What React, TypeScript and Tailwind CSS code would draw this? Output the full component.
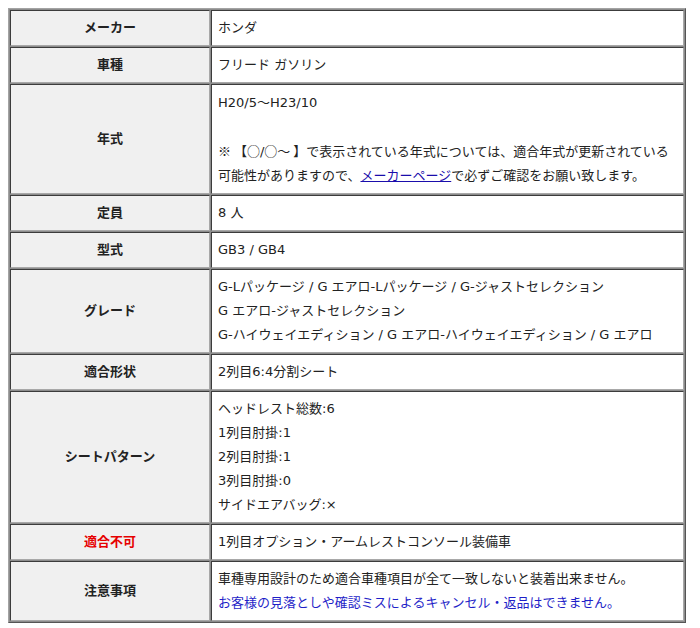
import React from "react";

type Row = {
  label: string;
  labelClass?: string;
  lines: React.ReactNode[];
};

const Cjk = ({ children }: { children: React.ReactNode }) => (
  <span className="font-['Noto_Sans_CJK_JP',sans-serif]">{children}</span>
);

const rows: Row[] = [
  { label: "メーカー", lines: ["ホンダ"] },
  { label: "車種", lines: ["フリード ガソリン"] },
  {
    label: "年式",
    lines: [
      <>
        H20/5<Cjk>～</Cjk>H23/10
      </>,
      "\u00a0",
      <>
        <Cjk>※ 【○</Cjk>/<Cjk>○～ 】</Cjk>で表示されている年式については、適合年式が更新されている
      </>,
      <>
        可能性がありますので、
        <a href="#" className="text-[#1a0dab] underline">
          メーカーページ
        </a>
        で必ずご確認をお願い致します。
      </>,
    ],
  },
  { label: "定員", lines: ["8 人"] },
  { label: "型式", lines: ["GB3 / GB4"] },
  {
    label: "グレード",
    lines: [
      "G-Lパッケージ / G エアロ-Lパッケージ / G-ジャストセレクション",
      "G エアロ-ジャストセレクション",
      "G-ハイウェイエディション / G エアロ-ハイウェイエディション / G エアロ",
    ],
  },
  { label: "適合形状", lines: ["2列目6:4分割シート"] },
  {
    label: "シートパターン",
    lines: ["ヘッドレスト総数:6", "1列目肘掛:1", "2列目肘掛:1", "3列目肘掛:0", "サイドエアバッグ:×"],
  },
  { label: "適合不可", labelClass: "text-[#e60000]", lines: ["1列目オプション・アームレストコンソール装備車"] },
  {
    label: "注意事項",
    lines: [
      "車種専用設計のため適合車種項目が全て一致しないと装着出来ません。",
      <span className="text-[#1f1fc8]">お客様の見落としや確認ミスによるキャンセル・返品はできません。</span>,
    ],
  },
];

export default function App() {
  return (
    <div className="min-h-[628px] bg-white pl-[8px] pt-[8px] font-['DejaVu_Sans','Noto_Sans_CJK_JP',sans-serif] text-[13px] text-[#222]">
      <table className="w-[678px] border-separate border-spacing-[1px] border border-t-[#a3a3a3] border-l-[#a3a3a3] border-r-[#555] border-b-[#555] bg-[#8c8c8c]">
        <tbody>
          {rows.map((row) => (
            <tr key={row.label}>
              <td
                className={`w-[200px] border border-t-[#3c3c3c] border-l-[#3c3c3c] border-r-[#a8a8a8] border-b-[#a8a8a8] bg-[#f0f0f0] px-[6px] py-[5px] text-center align-middle font-bold leading-[24px] ${row.labelClass ?? ""}`}
              >
                {row.label}
              </td>
              <td className="border border-t-[#3c3c3c] border-l-[#3c3c3c] border-r-[#a8a8a8] border-b-[#a8a8a8] bg-white px-[6px] py-[5px] align-middle leading-[24px]">
                {row.lines.map((line, i) => (
                  <div key={i} className="whitespace-nowrap">
                    {line}
                  </div>
                ))}
              </td>
            </tr>
          ))}
        </tbody>
      </table>
    </div>
  );
}
